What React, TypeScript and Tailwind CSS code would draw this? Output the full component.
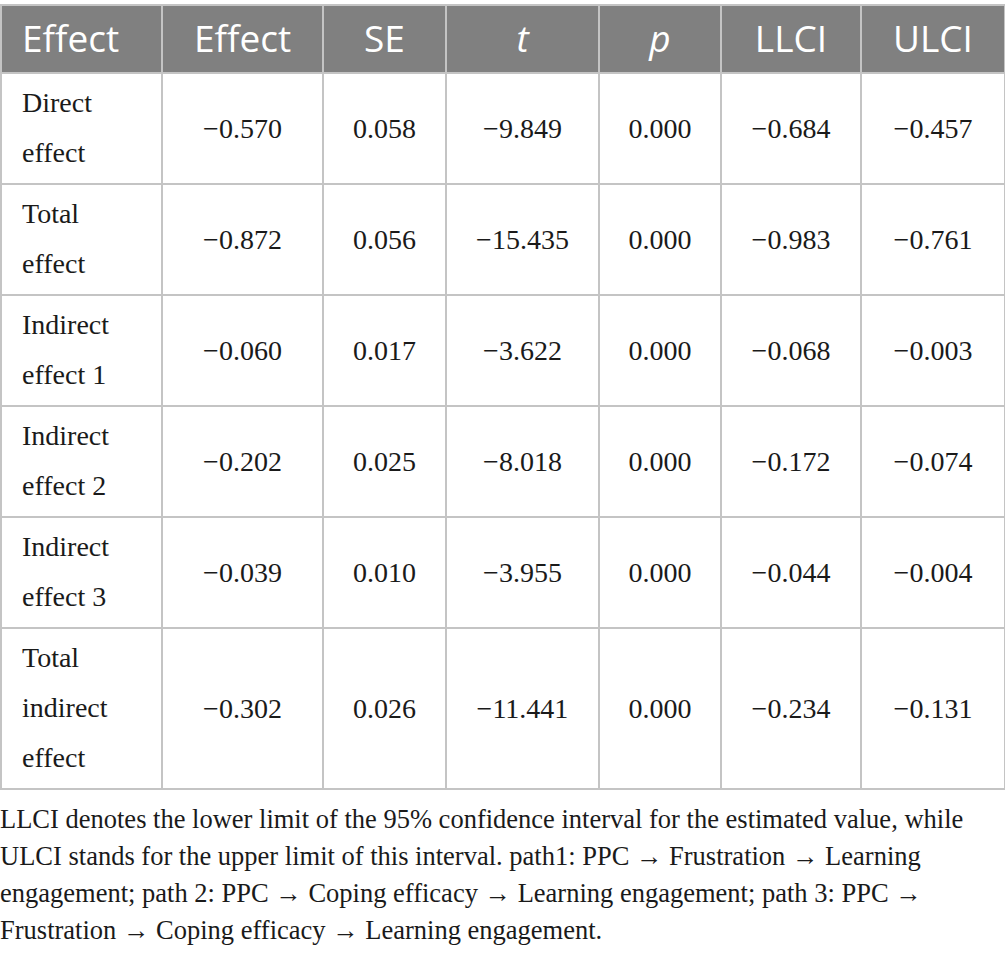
const rows = [
  { label: ["Direct", "effect"], values: ["−0.570", "0.058", "−9.849", "0.000", "−0.684", "−0.457"] },
  { label: ["Total", "effect"], values: ["−0.872", "0.056", "−15.435", "0.000", "−0.983", "−0.761"] },
  { label: ["Indirect", "effect 1"], values: ["−0.060", "0.017", "−3.622", "0.000", "−0.068", "−0.003"] },
  { label: ["Indirect", "effect 2"], values: ["−0.202", "0.025", "−8.018", "0.000", "−0.172", "−0.074"] },
  { label: ["Indirect", "effect 3"], values: ["−0.039", "0.010", "−3.955", "0.000", "−0.044", "−0.004"] },
  { label: ["Total", "indirect", "effect"], values: ["−0.302", "0.026", "−11.441", "0.000", "−0.234", "−0.131"] },
];

const widths = ["w-[161px]", "w-[161px]", "w-[123px]", "w-[153px]", "w-[122px]", "w-[140px]", "w-[144px]"];

export default function App() {
  return (
    <div className="w-[1005px] h-[958px] bg-white pt-[4px] overflow-hidden">
      <table className="w-[1004px] table-fixed border-collapse">
        <colgroup>
          {widths.map((w, i) => (
            <col key={i} className={w} />
          ))}
        </colgroup>
        <thead>
          <tr className="bg-[#808080] text-white text-[37px] leading-[40px] font-['Open_Sans',sans-serif]">
            <th className="border-2 border-[#c4c4c4] text-left font-normal pl-[20px] h-[68px] pb-[2px]">Effect</th>
            <th className="border-2 border-[#c4c4c4] text-center font-normal pb-[2px]">Effect</th>
            <th className="border-2 border-[#c4c4c4] text-center font-normal pb-[2px]">SE</th>
            <th className="border-2 border-[#c4c4c4] text-center font-normal italic pb-[2px]">t</th>
            <th className="border-2 border-[#c4c4c4] text-center font-normal italic pb-[2px]">p</th>
            <th className="border-2 border-[#c4c4c4] text-center font-normal pb-[2px]">LLCI</th>
            <th className="border-2 border-[#c4c4c4] text-center font-normal pb-[2px]">ULCI</th>
          </tr>
        </thead>
        <tbody className="font-['Liberation_Serif',serif] text-[28px] text-[#1a1a1a]">
          {rows.map((row, i) => (
            <tr key={i}>
              <td className="border-2 border-[#c4c4c4] pl-[20px] pt-[4px] pb-[5px] leading-[50px] align-middle">
                {row.label.map((l, j) => (
                  <div key={j}>{l}</div>
                ))}
              </td>
              {row.values.map((v, j) => (
                <td key={j} className="border-2 border-[#c4c4c4] text-center align-middle leading-[50px]">
                  {v}
                </td>
              ))}
            </tr>
          ))}
        </tbody>
      </table>
      <p className="mt-[11px] w-[1000px] font-['Liberation_Serif',serif] text-[26.5px] leading-[37px] text-[#1a1a1a]">
        LLCI denotes the lower limit of the 95% confidence interval for the estimated value, while ULCI stands for the
        upper limit of this interval. path1: PPC → Frustration → Learning engagement; path 2: PPC → Coping efficacy →
        Learning engagement; path 3: PPC → Frustration → Coping efficacy → Learning engagement.
      </p>
    </div>
  );
}
